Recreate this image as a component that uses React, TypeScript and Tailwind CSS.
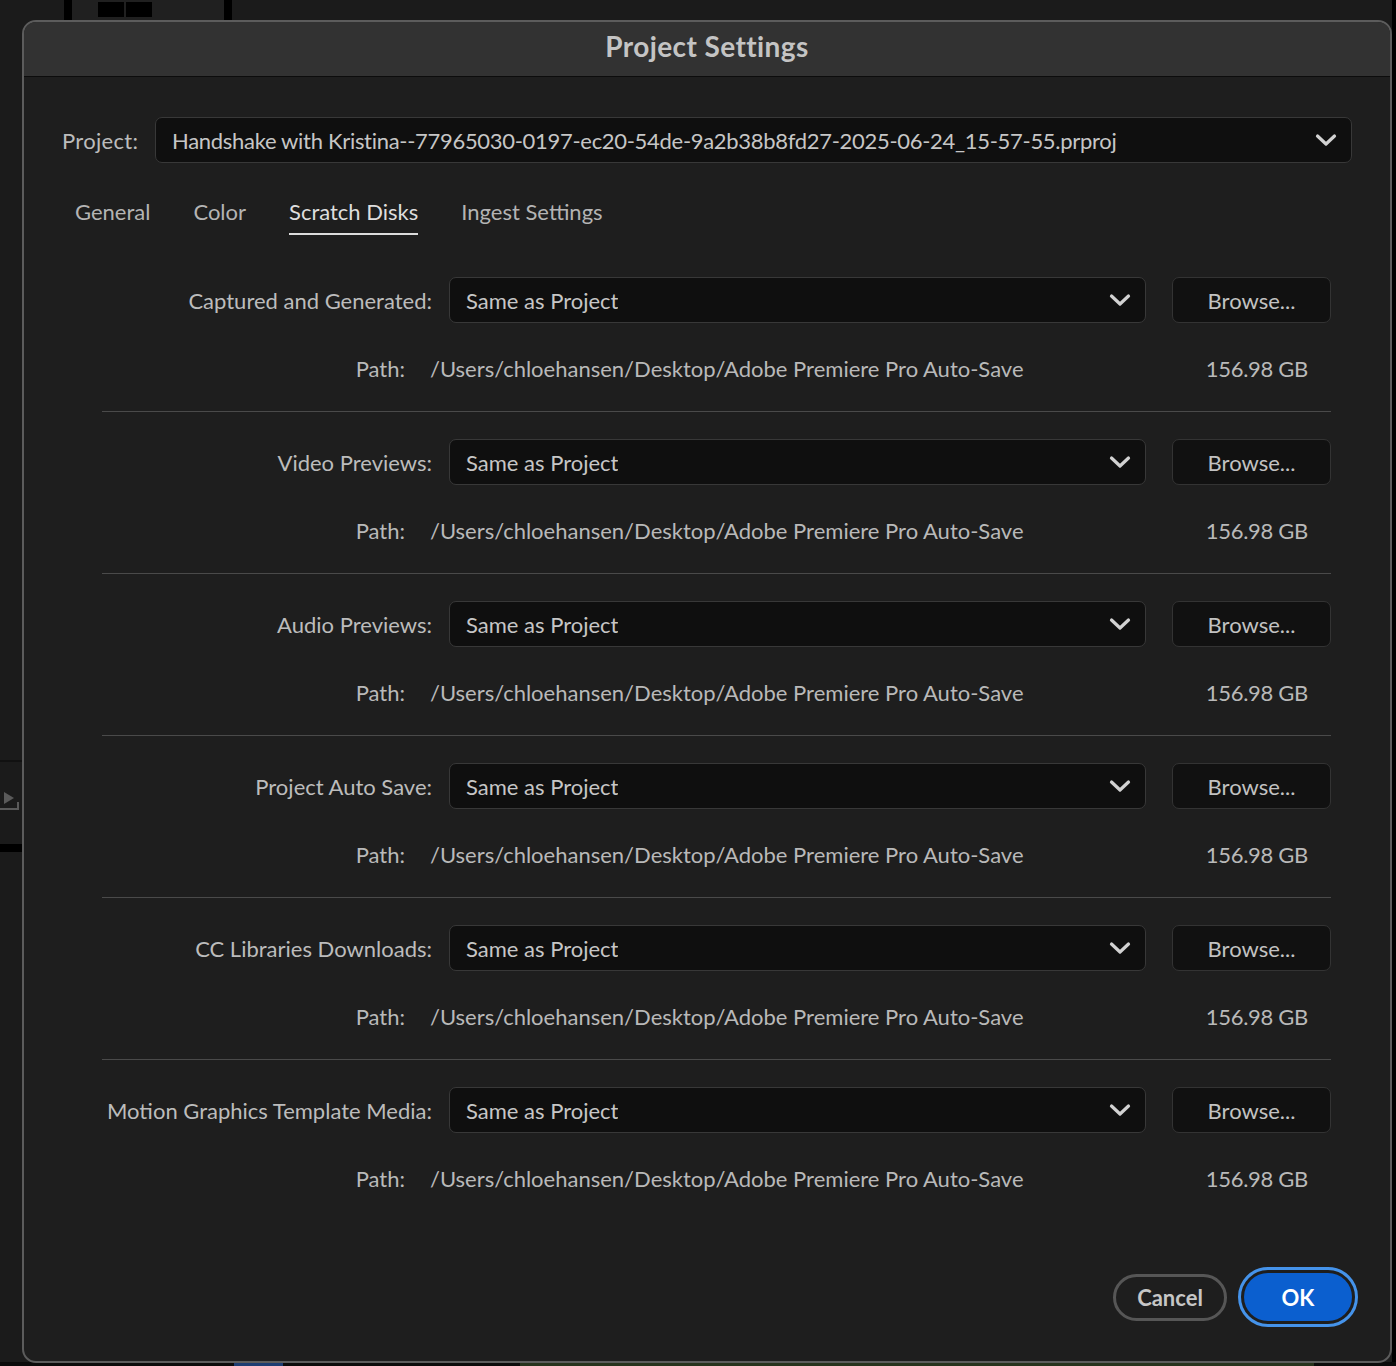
const font = { fontFamily: "Lato, 'Noto Sans', sans-serif" };

const disks = [
  "Captured and Generated:",
  "Video Previews:",
  "Audio Previews:",
  "Project Auto Save:",
  "CC Libraries Downloads:",
  "Motion Graphics Template Media:",
];

const PATH = "/Users/chloehansen/Desktop/Adobe Premiere Pro Auto-Save";

function Chevron() {
  return (
    <svg width="22" height="14" viewBox="0 0 22 14" fill="none" className="shrink-0">
      <path d="M2.5 3 L11 11 L19.5 3" stroke="#d2d2d2" strokeWidth="3.2" strokeLinecap="round" strokeLinejoin="round" />
    </svg>
  );
}

function SelectBox({ value, className }: { value: string; className?: string }) {
  return (
    <div
      className={
        "flex h-[46px] items-center justify-between rounded-[7px] border border-[#383838] bg-[#0f0f0f] pl-[16px] pr-[14px] " +
        (className ?? "")
      }
    >
      <span className="truncate text-[22px] text-[#c6c6c6]">{value}</span>
      <Chevron />
    </div>
  );
}

function DiskRow({ label, last }: { label: string; last: boolean }) {
  return (
    <div className={last ? "" : "border-b border-[#4a4a4a] pb-[28px] mb-[27px]"}>
      <div className="flex items-center">
        <div className="w-[347px] pr-[17px] text-right text-[22px] text-[#bcbcbc] whitespace-nowrap">{label}</div>
        <SelectBox value="Same as Project" className="w-[697px]" />
        <button className="ml-[26px] flex h-[46px] w-[159px] items-center justify-center rounded-[7px] border border-[#333] bg-[#111] text-[22px] text-[#c2c2c2]">
          Browse...
        </button>
      </div>
      <div className="mt-[30px] flex h-[30px] items-center text-[22px] text-[#b9b9b9]">
        <div className="w-[303px] text-right">Path:</div>
        <div className="ml-[25px] flex-1">{PATH}</div>
        <div className="pr-[23px] tracking-[-0.3px]">156.98 GB</div>
      </div>
    </div>
  );
}

export default function App() {
  const tabs = ["General", "Color", "Scratch Disks", "Ingest Settings"];
  return (
    <div className="relative h-[1366px] w-[1396px] overflow-hidden bg-[#1b1b1b]" style={font}>
      {/* app behind the dialog */}
      <div className="absolute left-[64px] top-0 h-[20px] w-[8px] bg-black" />
      <div className="absolute left-[72px] top-0 h-[20px] w-[152px] bg-[#202020]" />
      <div className="absolute left-[98px] top-[2px] h-[15px] w-[26px] bg-black" />
      <div className="absolute left-[126px] top-[2px] h-[15px] w-[26px] bg-black" />
      <div className="absolute left-[224px] top-0 h-[20px] w-[8px] bg-black" />
      <div className="absolute left-0 top-[760px] h-[2px] w-[22px] bg-[#111]" />
      <div className="absolute left-0 top-[788px]">
        <svg width="20" height="24" viewBox="0 0 20 24">
          <path d="M4 4 L14 10 L4 16 Z" fill="#5a5a5a" />
          <path d="M0 21 H18 V14" stroke="#5a5a5a" strokeWidth="2" fill="none" />
        </svg>
      </div>
      <div className="absolute left-0 top-[844px] h-[8px] w-[22px] bg-black" />
      <div className="absolute right-0 top-0 h-full w-[4px] bg-black" />
      <div className="absolute bottom-0 left-0 h-[4px] w-full bg-[#0b0b0b]" />
      <div className="absolute bottom-0 left-[234px] h-[4px] w-[49px] bg-[#1d3d72]" />
      <div className="absolute bottom-0 left-[520px] h-[4px] w-[794px] bg-[#27331d]" />

      {/* dialog */}
      <div className="relative ml-[22px] mt-[20px] flex h-[1343px] w-[1370px] flex-col overflow-hidden rounded-[14px] border-2 border-[#5c5c5c] bg-[#1e1e1e]">
        <div className="flex h-[55px] shrink-0 items-center justify-center border-b border-[#0c0c0c] bg-[#323232] pb-[6px]">
          <span className="text-[28px] font-bold tracking-[0.4px] text-[#c4c4c4]">Project Settings</span>
        </div>

        <div className="flex flex-1 flex-col px-[38px] pt-[40px]">
          <div className="flex items-center">
            <span className="w-[93px] text-[22px] tracking-[0.3px] text-[#bcbcbc]">Project:</span>
            <SelectBox
              value="Handshake with Kristina--77965030-0197-ec20-54de-9a2b38b8fd27-2025-06-24_15-57-55.prproj"
              className="flex-1 tracking-[-0.3px]"
            />
          </div>

          <div className="mt-[34px] flex gap-[43px] pl-[13px]">
            {tabs.map((t) => (
              <div
                key={t}
                className={
                  "h-[38px] border-b-2 text-[22px] leading-[30px] " +
                  (t === "Scratch Disks" ? "border-[#dcdcdc] text-[#dedede]" : "border-transparent text-[#b4b4b4]")
                }
              >
                {t}
              </div>
            ))}
          </div>

          <div className="ml-[40px] mr-[21px] mt-[42px]">
            {disks.map((d, i) => (
              <DiskRow key={d} label={d} last={i === disks.length - 1} />
            ))}
          </div>

          <div className="mt-auto mb-[40px] flex items-center justify-end gap-[17px]">
            <button className="flex h-[47px] w-[114px] items-center justify-center rounded-full border-[3px] border-[#565656] text-[22px] font-bold text-[#c6c6c6]">
              Cancel
            </button>
            <button className="flex h-[48px] w-[108px] items-center justify-center rounded-full bg-[#0b5fcf] text-[22px] font-bold text-white outline-[3px] outline-offset-[3px] outline-[#4593ea] outline-solid">
              OK
            </button>
          </div>
        </div>
      </div>
    </div>
  );
}
